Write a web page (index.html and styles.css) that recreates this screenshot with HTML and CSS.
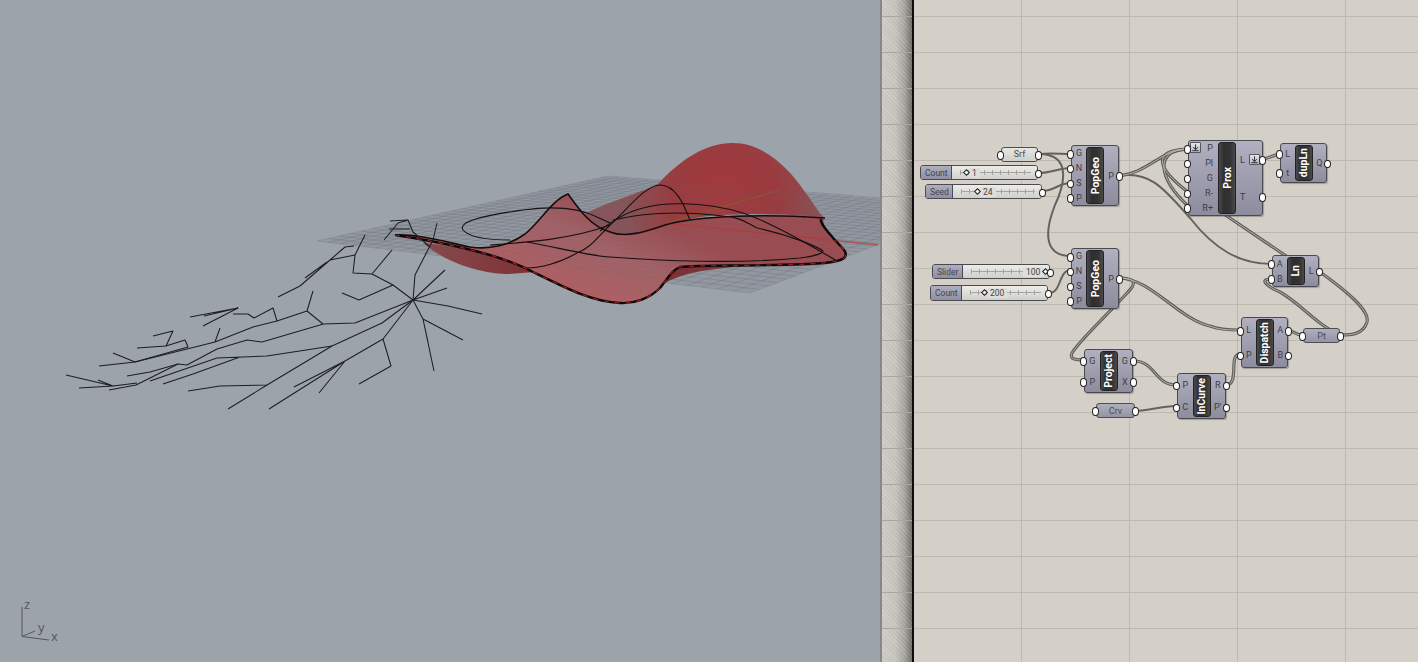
FILE: index.html
```html
<!DOCTYPE html>
<html lang="en">
<head>
    <meta charset="UTF-8">
    <title>Rhino + Grasshopper</title>
    <link rel="stylesheet" href="styles.css">
</head>
<body>
    <div class="app">
        <!-- rhino viewport -->
        <div class="viewport">
            <svg class="scene" width="880" height="662" viewBox="0 0 880 662">
                <defs>
                    <radialGradient id="hump" gradientUnits="userSpaceOnUse" cx="725" cy="200" r="100">
                        <stop offset="0" stop-color="#a23a3e"/>
                        <stop offset="0.55" stop-color="#9a3b3f"/>
                        <stop offset="1" stop-color="#875458"/>
                    </radialGradient>
                    <linearGradient id="sheet" gradientUnits="userSpaceOnUse" x1="640" y1="215" x2="600" y2="305">
                        <stop offset="0" stop-color="#9c4549" stop-opacity="0.9"/>
                        <stop offset="0.45" stop-color="#a35e62" stop-opacity="0.92"/>
                        <stop offset="1" stop-color="#ad5f63"/>
                    </linearGradient>
                    <linearGradient id="under" gradientUnits="userSpaceOnUse" x1="423" y1="245" x2="530" y2="270">
                        <stop offset="0" stop-color="#8a4a4e"/>
                        <stop offset="1" stop-color="#7c3234"/>
                    </linearGradient>
                </defs>

                <!-- construction plane -->
                <polygon class="plane" points="317,241 608,176 980,206 750,293"/>
                <path id="plane-grid" class="plane-grid" d=""/>

                <!-- surface -->
                <path class="surface-under" d="M423 243 C440 258 470 272 505 274 C520 274 532 271 540 273 L523 267 C490 252 450 245 423 243 Z"/>
                <path class="surface-hump" d="M583 215 C600 205 625 198 657 185 C680 160 705 143 733 143 C765 143 790 170 805 192 C815 205 820 215 825 218 C790 214 740 212 700 217 C670 222 645 235 625 235 C610 235 598 228 590 222 Z"/>
                <path class="surface-sheet" d="M395 235 C420 234 445 242 470 247 C490 250 510 245 525 234 C540 222 552 200 568 194 C578 208 590 226 610 232 C625 238 645 232 665 225 C700 215 770 212 825 218 C820 222 828 232 835 240 C842 248 848 252 845 257 C840 264 810 264 770 265 C740 266 700 265 680 267 C672 270 668 278 660 288 C650 298 635 304 620 303 C590 302 560 285 523 267 C490 252 440 242 395 235 Z"/>
                <path class="surface-under" d="M680 267 C672 271 668 278 662 285 C680 273 710 268 750 266 Z"/>
                <use class="plane-grid-over" href="#plane-grid"/>

                <!-- world axes -->
                <line class="axis-x" x1="667" y1="223" x2="878" y2="245"/>
                <line class="axis-y" x1="667" y1="223" x2="780" y2="190"/>

                <!-- curves on surface -->
                <g class="curves">
                    <path d="M510 240 C490 240 470 238 463 230 C458 222 480 216 523 210 C545 207 575 206 597 217 L610 223"/>
                    <path d="M600 231 C605 226 625 212 643 208 C660 203 700 200 743 213 C770 222 810 245 837 261"/>
                    <path d="M490 245 C520 243 570 240 610 225 C625 212 645 185 660 185 C676 185 684 205 690 220"/>
                    <path d="M527 242 C560 248 590 256 610 257 C660 261 740 264 800 258 C815 256 826 253 822 250 C815 246 790 235 757 228 C745 222 740 217 723 216 C690 212 650 211 613 220"/>
                    <path d="M610 225 C595 240 590 248 577 253 C560 263 540 268 527 268"/>
                </g>

                <!-- surface edges -->
                <path class="edge-back" d="M395 235 C420 234 445 242 470 247 C490 250 510 245 525 234 C540 222 552 200 568 194 C578 208 590 226 610 232 C625 238 645 232 665 225 C700 215 770 214 825 218"/>
                <path class="edge-front" d="M395 235 C440 242 490 252 523 267 C560 285 590 302 620 303 C635 304 650 298 660 288 C668 278 672 270 680 267 C700 265 740 266 770 265 C810 264 840 264 845 257 C848 252 842 248 835 240 C828 232 820 224 821 219"/>
                <path class="edge-dash" d="M395 235 C440 242 490 252 523 267 C560 285 590 302 620 303 C635 304 650 298 660 288 C668 278 672 270 680 267 C700 265 740 266 770 265 C810 264 840 264 845 257 C848 252 842 248 835 240"/>

                <!-- branching lines -->
                <g class="branches">
                    <path d="M66 375 L113 386 M98 380 L113 386 M79 388 L113 386 L137 383"/>
                    <path d="M109 390 L136 385 L150 378 L178 364 L187 365 L217 349 L247 340 L262 342 L320 325 L323 324 L355 323 L413 300"/>
                    <path d="M127 376 L150 372 L178 364"/>
                    <path d="M99 366 L135 362 L188 347 L185 340 L166 346 L137 348"/>
                    <path d="M113 353 L135 362 M153 336 L173 331 L166 346"/>
                    <path d="M135 362 L215 342 L220 328 M215 342 L253 327 L277 321 L273 308 L254 318 L248 314 L233 314"/>
                    <path d="M190 317 L238 308 L203 326 M204 316 L238 308"/>
                    <path d="M277 321 L307 311 L313 291 M307 311 L323 324"/>
                    <path d="M150 381 L217 358 L267 356 L332 346 M163 384 L193 374 L240 357"/>
                    <path d="M188 391 L220 386 L267 385 L332 346 L382 323 L413 300"/>
                    <path d="M228 409 L267 385"/>
                    <path d="M413 300 L383 339 L345 361 L294 387 M345 361 L269 409 M345 361 L319 393"/>
                    <path d="M383 339 L391 366 L359 384"/>
                    <path d="M413 300 L423 319 L434 371 M423 319 L428 342 M423 319 L463 340"/>
                    <path d="M413 300 L448 306 L482 314 M413 300 L447 288 M413 300 L445 270"/>
                    <path d="M413 300 L393 285 L372 274 L353 273 L355 255 L365 235 M372 274 L392 250"/>
                    <path d="M393 285 L359 300 L342 293"/>
                    <path d="M413 300 L415 275 L433 240 L437 223"/>
                    <path d="M355 255 L330 260 L345 247 L354 246 M330 260 L300 286 L278 297 M327 262 L305 278"/>
                    <path d="M384 240 L398 223 L408 220 L390 221 M389 229 L410 229 M408 220 L413 232 L430 247"/>
                </g>

                <!-- world axes icon -->
                <g class="gizmo">
                    <path d="M22 607 L22 636.500 L49 640 M22 636.500 L35 631"/>
                    <text x="24" y="609">z</text>
                    <text x="38" y="632">y</text>
                    <text x="51" y="641">x</text>
                </g>
            </svg>
        </div>

        <div class="splitter"></div>

        <!-- grasshopper canvas -->
        <div class="canvas">
            <svg class="wires" width="504" height="662" viewBox="914 0 504 662">
                <defs>
                    <g id="list-wires">
                        <path d="M1119 176 C1150 172 1160 150 1188 149"/>
                        <path d="M1188 149 C1152 150 1156 168 1188 192"/>
                        <path d="M1188 149 C1152 150 1160 180 1188 206"/>
                        <path d="M1264 159 L1279 154"/>
                        <path d="M1215 208 L1292 260"/>
                        <path d="M1341 335 C1320 328 1300 303 1280 292 C1268 287 1258 279 1271 279"/>
                        <path d="M1320 272 C1345 290 1370 310 1367 322 C1363 335 1350 335 1341 335"/>
                        <path d="M1119 278 C1150 278 1180 320 1210 326 C1220 330 1230 330 1240 330"/>
                        <path d="M1119 278 C1138 278 1135 285 1128 292 C1110 312 1085 335 1074 350 C1068 358 1072 360 1084 360"/>
                        <path d="M1134 361 C1155 361 1155 385 1176 385"/>
                        <path d="M1226 385 C1240 385 1228 354 1240 354"/>
                        <path d="M1288 330 C1294 331 1295 335 1302 335"/>
                    </g>
                </defs>
                <g class="wire">
                    <path d="M1039 154 C1050 153 1060 154 1071 154"/>
                    <path d="M1039 154 C1075 154 1062 190 1055 205 C1047 225 1040 256 1071 256"/>
                    <path d="M1039 173 C1052 173 1058 168 1071 168"/>
                    <path d="M1042 191 C1055 191 1058 183 1071 183"/>
                    <path d="M1049 293 C1062 293 1058 270 1071 270"/>
                    <path d="M1119 176 C1150 170 1165 190 1190 218 C1215 250 1240 264 1272 264"/>
                    <path d="M1135 411 C1150 411 1160 406 1176 406"/>
                </g>
                <use class="wire-list" href="#list-wires"/>
                <use class="wire-list-inner" href="#list-wires"/>
            </svg>

            <!-- parameters -->
            <div class="param param-light at-srf"><span>Srf</span></div>
            <div class="param param-dark at-pt"><span>Pt</span></div>
            <div class="param param-dark at-crv"><span>Crv</span></div>

            <!-- sliders -->
            <div class="slider at-count1">
                <div class="slider-label">Count</div>
                <div class="slider-track">
                    <span class="slider-fill" style="width:12px"></span><i class="slider-knob"></i><b class="slider-value">1</b>
                </div>
            </div>
            <div class="slider at-seed">
                <div class="slider-label">Seed</div>
                <div class="slider-track">
                    <span class="slider-fill" style="width:22px"></span><i class="slider-knob"></i><b class="slider-value">24</b>
                </div>
            </div>
            <div class="slider at-slider">
                <div class="slider-label">Slider</div>
                <div class="slider-track">
                    <span class="slider-fill" style="width:60px"></span><b class="slider-value">100</b><i class="slider-knob"></i>
                </div>
            </div>
            <div class="slider at-count2">
                <div class="slider-label">Count</div>
                <div class="slider-track">
                    <span class="slider-fill" style="width:20px"></span><i class="slider-knob"></i><b class="slider-value">200</b>
                </div>
            </div>

            <!-- components -->
            <div class="node at-popgeo1">
                <div class="ports ports-in"><span>G</span><span>N</span><span>S</span><span>P</span></div>
                <div class="pill"><span>PopGeo</span></div>
                <div class="ports ports-out"><span>P</span></div>
            </div>
            <div class="node at-popgeo2">
                <div class="ports ports-in"><span>G</span><span>N</span><span>S</span><span>P</span></div>
                <div class="pill"><span>PopGeo</span></div>
                <div class="ports ports-out"><span>P</span></div>
            </div>
            <div class="node node-prox at-prox">
                <div class="ports ports-in">
                    <span><svg class="flatten flatten-in" width="11" height="11" viewBox="0 0 10 10"><path d="M5 1.500V7M2.500 4.500L5 7.500L7.500 4.500M1.500 8.500H8.500"/></svg>P</span>
                    <span>Pl</span><span>G</span><span>R-</span><span>R+</span>
                </div>
                <div class="pill"><span>Prox</span></div>
                <div class="ports ports-out">
                    <span>L<svg class="flatten flatten-out" width="11" height="11" viewBox="0 0 10 10"><path d="M5 1.500V7M2.500 4.500L5 7.500L7.500 4.500M1.500 8.500H8.500"/></svg></span>
                    <span>T</span>
                </div>
            </div>
            <div class="node at-dupln">
                <div class="ports ports-in"><span>L</span><span>t</span></div>
                <div class="pill"><span>dupLn</span></div>
                <div class="ports ports-out"><span>Q</span></div>
            </div>
            <div class="node at-ln">
                <div class="ports ports-in"><span>A</span><span>B</span></div>
                <div class="pill"><span>Ln</span></div>
                <div class="ports ports-out"><span>L</span></div>
            </div>
            <div class="node at-dispatch">
                <div class="ports ports-in"><span>L</span><span>P</span></div>
                <div class="pill"><span>Dispatch</span></div>
                <div class="ports ports-out"><span>A</span><span>B</span></div>
            </div>
            <div class="node at-project">
                <div class="ports ports-in"><span>G</span><span>P</span></div>
                <div class="pill"><span>Project</span></div>
                <div class="ports ports-out"><span>G</span><span>X</span></div>
            </div>
            <div class="node at-incurve">
                <div class="ports ports-in"><span>P</span><span>C</span></div>
                <div class="pill"><span>InCurve</span></div>
                <div class="ports ports-out"><span>R</span><span>P'</span></div>
            </div>
        </div>
    </div>

    <script src="script.js"></script>
</body>
</html>
```

FILE: styles.css
```css
* {
    margin: 0;
    padding: 0;
    box-sizing: border-box;
}
html, body {
    height: 100%;
    overflow: hidden;
}
body {
    font-family: Roboto, "Open Sans", sans-serif;
}
.app {
    display: flex;
    height: 100%;
    background-color: #d4d0c8;
}

/* viewport */
.viewport {
    flex: 0 0 880px;
    background-color: #9ca3ab;
}
.scene {
    display: block;
}
.plane {
    fill: rgba(122, 124, 132, 0.28);
    stroke: rgba(110, 112, 120, 0.5);
    stroke-width: 0.5;
}
.plane-grid {
    fill: none;
    stroke: rgba(105, 108, 118, 0.4);
    stroke-width: 0.6;
}
.plane-grid-over {
    opacity: 0.35;
}
.surface-under { fill: url(#under); }
.surface-hump { fill: url(#hump); }
.surface-sheet { fill: url(#sheet); }
.axis-x {
    stroke: #b5393c;
    stroke-opacity: 0.75;
    stroke-width: 1.4;
}
.axis-y {
    stroke: #7d6030;
    stroke-opacity: 0.7;
    stroke-width: 1.4;
}
.curves path {
    fill: none;
    stroke: #161012;
    stroke-width: 1.1;
}
.edge-back {
    fill: none;
    stroke: #1a0c0e;
    stroke-width: 1.6;
}
.edge-front {
    fill: none;
    stroke: #0c0808;
    stroke-width: 2.4;
}
.edge-dash {
    fill: none;
    stroke: #a81c20;
    stroke-width: 1.2;
    stroke-dasharray: 5 6;
}
.branches path {
    fill: none;
    stroke: #1c1f22;
    stroke-width: 1.05;
    stroke-linejoin: round;
}
.gizmo path {
    fill: none;
    stroke: #55585c;
    stroke-width: 1;
}
.gizmo text {
    font-family: "Open Sans", sans-serif;
    font-size: 13px;
    fill: #55585c;
}

/* splitter between the two windows */
.splitter {
    flex: 0 0 34px;
    border-left: 2px solid #85878a;
    border-right: 2px solid #0c0c0c;
    background-image:
        linear-gradient(#a9a79f 1px, transparent 1px),
        repeating-linear-gradient(45deg, rgba(255, 255, 255, 0.08) 0 1px, rgba(0, 0, 0, 0.03) 1px 3px),
        linear-gradient(90deg, #d0cec6 0%, #c8c6be 45%, #a9a7a1 75%, #6f6f6c 100%);
    background-size: 100% 36px, auto, auto;
    background-position: 0 16px, 0 0, 0 0;
}

/* grasshopper canvas */
.canvas {
    flex: 1;
    position: relative;
    overflow: hidden;
    background-color: #d4d0c8;
    background-image:
        linear-gradient(#bcb9b0 1px, transparent 1px),
        linear-gradient(90deg, #bcb9b0 1px, transparent 1px);
    background-size: 100% 36px, 108px 100%;
    background-position: 0 16px, 107px 0;
}
.wires {
    position: absolute;
    left: 0;
    top: 0;
}
.wire path {
    fill: none;
    stroke: #63635e;
    stroke-width: 2;
}
.wire-list {
    fill: none;
    stroke: #5e5e5a;
    stroke-width: 3.2;
}
.wire-list-inner {
    fill: none;
    stroke: #b4b2aa;
    stroke-width: 1;
}

/* grips shared by everything on the canvas */
.ports span::after,
.param::before,
.param::after,
.slider::after {
    content: "";
    position: absolute;
    width: 5px;
    height: 6.500px;
    border: 1.2px solid #222;
    border-radius: 50%;
    background-color: #fff;
}

/* component */
.node {
    position: absolute;
    display: flex;
    border: 1px solid #4a4a50;
    border-radius: 3px;
    background: linear-gradient(#b0b0c0, #8c8c9e);
    box-shadow: 1px 1px 1px rgba(0, 0, 0, 0.25);
    color: #3d3d44;
    font-size: 9px;
}
.ports {
    flex: 1;
    display: flex;
    flex-direction: column;
    justify-content: space-around;
    text-align: center;
}
.ports span {
    position: relative;
    display: block;
    line-height: 12px;
}
.ports-in span::after {
    left: -5px;
    top: 2.750px;
}
.ports-out span::after {
    right: -5px;
    top: 2.750px;
}
.pill {
    flex: 0 0 18px;
    margin: 1px 0;
    display: flex;
    align-items: center;
    justify-content: center;
    border-radius: 3px;
    background: linear-gradient(90deg, #4a4a4a, #2f2f2f 30%, #333 70%, #4a4a4a);
    border: 1px solid #222;
}
.pill span {
    writing-mode: vertical-rl;
    transform: rotate(180deg);
    color: #fff;
    font-size: 10.500px;
    font-weight: 700;
    white-space: nowrap;
}
.node-prox .ports-in {
    flex: 0 0 29px;
    text-align: right;
    padding-right: 5px;
}
.node-prox .ports-out {
    flex: 0 0 25px;
    text-align: left;
    padding-left: 4px;
}
.flatten {
    position: absolute;
    top: 0;
    background: linear-gradient(#e4e4e6, #b6b6c2);
    border: 1px solid #56565e;
    border-radius: 1px;
}
.flatten path {
    fill: none;
    stroke: #333;
    stroke-width: 1.1;
}
.flatten-in { left: 1px; }
.flatten-out { right: 1px; }

/* floating parameter */
.param {
    position: absolute;
    display: flex;
    align-items: center;
    justify-content: center;
    border: 1px solid #4d4d52;
    border-radius: 3px;
    color: #4d4d55;
    font-size: 9px;
}
.param::before {
    left: -5px;
    top: 3px;
}
.param::after {
    right: -5px;
    top: 3px;
}
.param-light { background: linear-gradient(#e6e6e2, #cfcfcb); }
.param-dark { background: linear-gradient(#aeaebc, #9494a6); }

/* number slider */
.slider {
    position: absolute;
    display: flex;
    border: 1px solid #4a4a50;
    border-radius: 3px;
    font-size: 8.500px;
    color: #44444c;
}
.slider::after {
    right: -5px;
    top: 3.500px;
}
.slider-label {
    display: flex;
    align-items: center;
    padding-left: 4px;
    border-right: 1px solid #4a4a50;
    border-radius: 2px 0 0 2px;
    background: linear-gradient(#aeaebc, #8f8fa2);
}
.slider-track {
    flex: 1;
    display: flex;
    align-items: center;
    border-radius: 0 2px 2px 0;
    background-color: #dededa;
    background-image:
        linear-gradient(#a5a5a2, #a5a5a2),
        repeating-linear-gradient(90deg, #a5a5a2 0 1px, transparent 1px 8px),
        linear-gradient(#ecece8, #cfcfcb);
    background-size: calc(100% - 14px) 1px, calc(100% - 14px) 5px, auto;
    background-position: 8px 50%, 8px 50%, 0 0;
    background-repeat: no-repeat;
}
.slider-fill {
    display: block;
    flex: none;
}
.slider-knob {
    flex: none;
    display: block;
    width: 5px;
    height: 5px;
    border: 1.2px solid #1a1a1a;
    background-color: #f4f4f0;
    transform: rotate(45deg);
}
.slider-value {
    flex: none;
    padding: 0 3px;
    font-weight: 400;
    background-color: #dededa;
}

/* places on the canvas: x - 914 */
.at-srf { left: 87px; top: 147px; width: 37px; height: 14.500px; }
.at-pt { left: 389px; top: 328px; width: 37px; height: 15px; }
.at-crv { left: 182px; top: 403px; width: 39px; height: 15px; }
.at-count1 { left: 6px; top: 165px; width: 118px; height: 15px; }
.at-count1 .slider-label { width: 31px; }
.at-seed { left: 11px; top: 184px; width: 117px; height: 15px; }
.at-seed .slider-label { width: 27px; }
.at-slider { left: 18px; top: 264px; width: 118px; height: 15px; }
.at-slider .slider-label { width: 30px; }
.at-count2 { left: 16px; top: 285px; width: 118px; height: 15.500px; }
.at-count2 .slider-label { width: 31px; }
.at-popgeo1 { left: 157px; top: 145px; width: 48px; height: 61px; }
.at-popgeo2 { left: 157px; top: 248px; width: 48px; height: 61px; }
.at-prox { left: 274px; top: 140px; width: 75px; height: 76px; }
.at-dupln { left: 366px; top: 143px; width: 47px; height: 40px; }
.at-ln { left: 358px; top: 255px; width: 47px; height: 32px; }
.at-dispatch { left: 327px; top: 317px; width: 47px; height: 51px; }
.at-project { left: 170px; top: 349px; width: 49px; height: 44px; }
.at-incurve { left: 263px; top: 373px; width: 49px; height: 46px; }
```

FILE: script.js
```js
// perspective grid of the construction plane
const corners = [[317, 241], [608, 176], [980, 206], [750, 293]];
const divisions = 32;

function planeMap() {
    const [[x0, y0], [x1, y1], [x2, y2], [x3, y3]] = corners;
    const dx1 = x1 - x2, dx2 = x3 - x2, sx = x0 - x1 + x2 - x3;
    const dy1 = y1 - y2, dy2 = y3 - y2, sy = y0 - y1 + y2 - y3;
    const det = dx1 * dy2 - dx2 * dy1;
    const g = (sx * dy2 - dx2 * sy) / det;
    const h = (dx1 * sy - sx * dy1) / det;
    return (u, v) => {
        const w = g * u + h * v + 1;
        return [
            (((x1 - x0 + g * x1) * u + (x3 - x0 + h * x3) * v + x0) / w).toFixed(1),
            (((y1 - y0 + g * y1) * u + (y3 - y0 + h * y3) * v + y0) / w).toFixed(1)
        ];
    };
}

const map = planeMap();
let d = "";
for (let i = 1; i < divisions; i++) {
    const t = i / divisions;
    d += `M${map(t, 0)}L${map(t, 1)}M${map(0, t)}L${map(1, t)}`;
}
document.getElementById("plane-grid").setAttribute("d", d);
```
